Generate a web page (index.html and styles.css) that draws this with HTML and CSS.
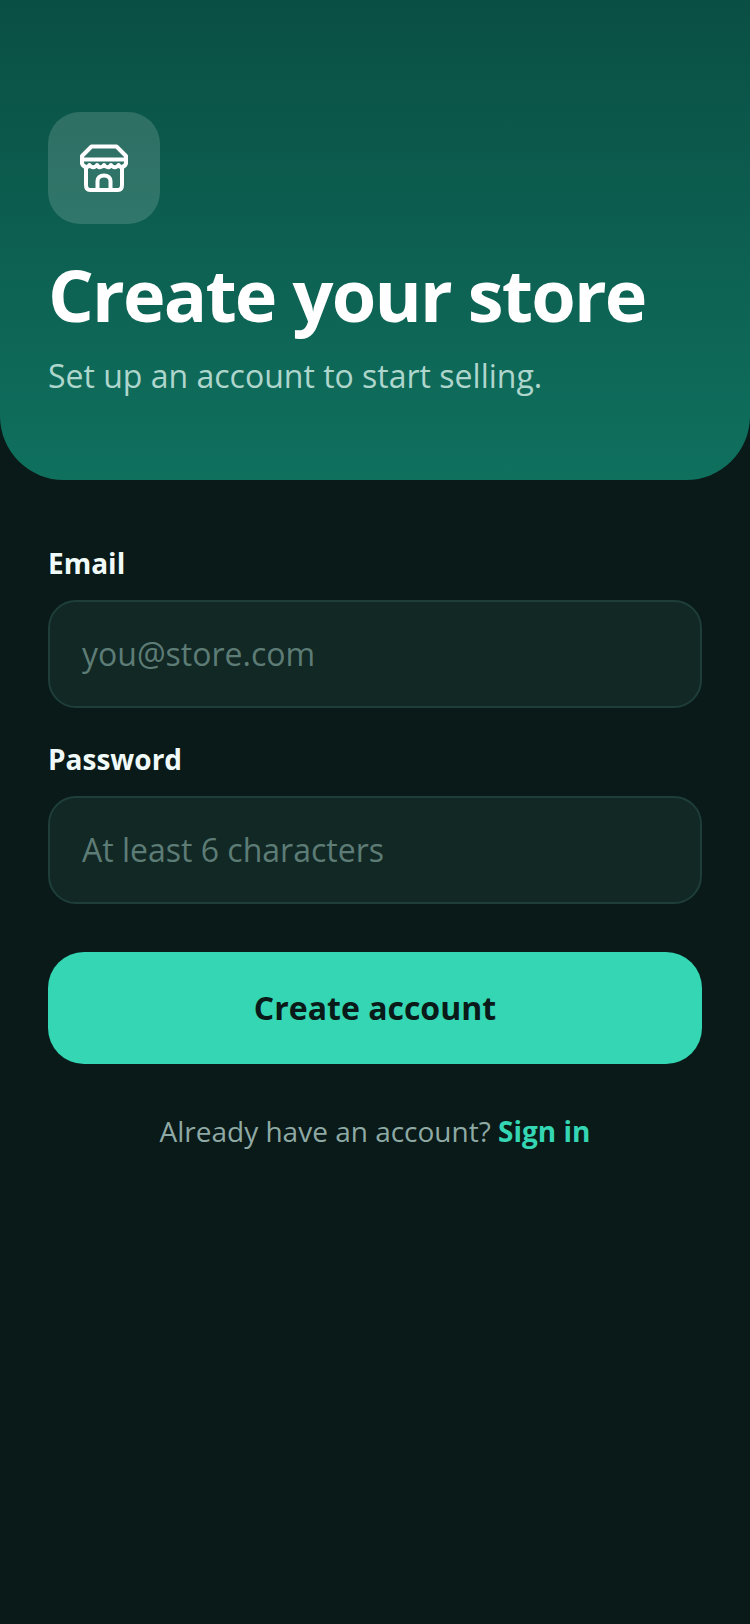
FILE: index.html

```html
<!DOCTYPE html>
<html lang="en">
<head>
    <meta charset="UTF-8">
    <meta name="viewport" content="width=device-width, initial-scale=1.0">
    <title>Create your store</title>
    <link rel="stylesheet" href="styles.css">
</head>
<body>
    <!-- Green header -->
    <header class="hero">
        <div class="hero-icon">
            <svg class="store-icon" viewBox="0 0 48 48" fill="none" stroke="#fff" stroke-width="4" stroke-linecap="round" stroke-linejoin="round">
                <path d="M2 19V12L11.500 2.500H36.500L46 12V19"/>
                <path d="M2 15.500H46"/>
                <path d="M2 19C3 23.500 8 24 9.500 21C11.500 24 15 24 17 21C18.500 24 22 24 24 21C26 24 29.500 24 31 21C33 24 36.500 24 38.500 21C40 24 45 23.500 46 19"/>
                <path d="M6 23V41C6 44.500 7.500 46 10 46H38C40.500 46 42 44.500 42 41V23"/>
                <path d="M17.500 46V37C17.500 33.500 20 31.500 24 31.500C28 31.500 30.500 33.500 30.500 37V46"/>
            </svg>
        </div>
        <h1>Create your store</h1>
        <p>Set up an account to start selling.</p>
    </header>

    <!-- Sign up form -->
    <main class="form-wrap">
        <form class="signup-form">
            <label class="field-label" for="email">Email</label>
            <input class="field-input" id="email" type="text" placeholder="you@store.com">

            <label class="field-label" for="password">Password</label>
            <input class="field-input" id="password" type="password" placeholder="At least 6 characters">

            <button class="submit-btn" type="button">Create account</button>
        </form>
        <p class="signin-line">Already have an account? <a href="#">Sign in</a></p>
    </main>
</body>
</html>
```

FILE: styles.css

```css
* {
    margin: 0;
    padding: 0;
    box-sizing: border-box;
}

body {
    font-family: "Open Sans", sans-serif;
    background: #091a18;
    height: 1624px;
    overflow: hidden;
}

/* Header */
.hero {
    height: 480px;
    padding: 112px 48px 0;
    background: linear-gradient(180deg, #0a4f44 0%, #0f705e 100%);
    border-radius: 0 0 64px 64px;
}

.hero-icon {
    width: 112px;
    height: 112px;
    border-radius: 32px;
    background: rgba(255, 255, 255, 0.15);
    display: flex;
    align-items: center;
    justify-content: center;
}

.store-icon {
    width: 48px;
    height: 48px;
}

.hero h1 {
    margin-top: 20px;
    font-size: 72px;
    line-height: 100px;
    font-weight: 700;
    color: #fff;
    letter-spacing: -1.8px;
}

.hero p {
    margin-top: 10px;
    font-size: 32px;
    line-height: 44px;
    color: #aed6cc;
}

/* Form */
.form-wrap {
    padding: 59px 48px 0;
}

.field-label {
    display: block;
    font-size: 28px;
    line-height: 48px;
    font-weight: 700;
    color: #f0faf8;
    margin-bottom: 13px;
}

.field-input {
    display: block;
    width: 100%;
    height: 108px;
    padding: 0 32px 2px;
    margin-bottom: 27px;
    border: 2px solid #1f3e39;
    border-radius: 28px;
    background: #122825;
    font-family: inherit;
    font-size: 32px;
    color: #fff;
    outline: none;
}

.field-input::placeholder {
    color: #5d7c76;
    opacity: 1;
}

.submit-btn {
    display: block;
    width: 100%;
    height: 112px;
    margin-top: 48px;
    padding-bottom: 2px;
    border: none;
    border-radius: 36px;
    background: #34d6b3;
    font-family: inherit;
    font-size: 32px;
    font-weight: 700;
    color: #091a18;
}

.signin-line {
    margin-top: 45px;
    text-align: center;
    font-size: 28px;
    line-height: 44px;
    color: #8fa9a4;
}

.signin-line a {
    color: #34d6b3;
    font-weight: 700;
    text-decoration: none;
}
```
